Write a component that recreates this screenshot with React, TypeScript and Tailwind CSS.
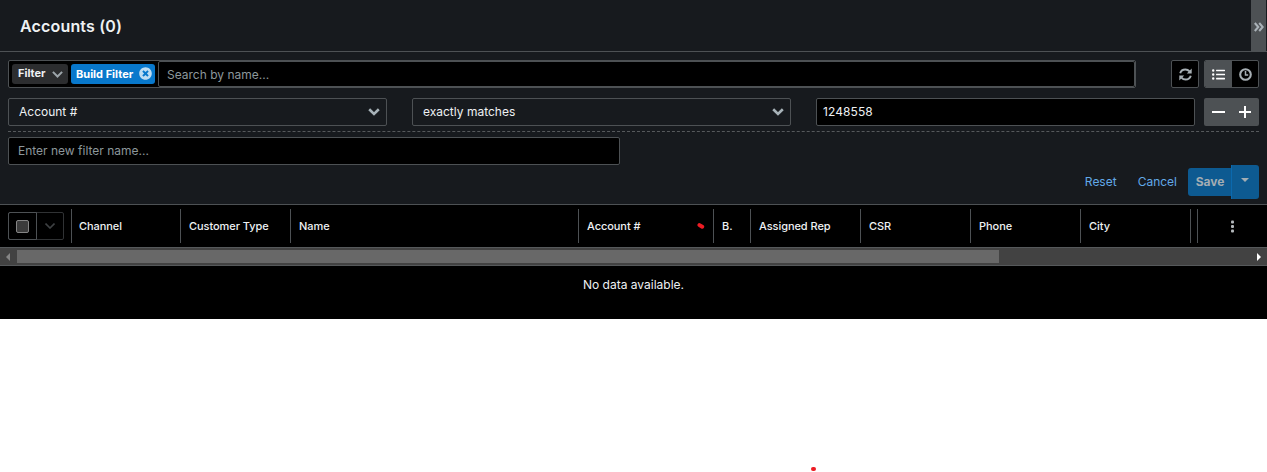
import {
  FaTimesCircle,
  FaListUl,
} from "react-icons/fa";

const columns = [
  { label: "Channel", width: 109, padding: "pl-[7px]" },
  { label: "Customer Type", width: 110, padding: "pl-2" },
  { label: "Name", width: 288, padding: "pl-2" },
  { label: "Account #", width: 135, padding: "pl-2", marked: true },
  { label: "B.", width: 37, padding: "pl-2" },
  { label: "Assigned Rep", width: 110, padding: "pl-2" },
  { label: "CSR", width: 110, padding: "pl-2" },
  { label: "Phone", width: 110, padding: "pl-2" },
  { label: "City", width: 110, padding: "pl-2" },
];

function Chevron({ className = "" }: { className?: string }) {
  return (
    <svg className={className} width="12" height="8" viewBox="0 0 12 8" fill="none" stroke="currentColor" strokeWidth="2.600">
      <path d="M1.200 1.300 6 6 10.800 1.300" />
    </svg>
  );
}

function Header() {
  return (
    <header className="flex h-[52px] border-b border-[#4d5154]">
      <h1 className="flex-1 pl-5 pt-px text-base font-semibold leading-[51px] tracking-[0.16px] text-[#eef1f3]">
        Accounts (0)
      </h1>
      <button className="-mb-px mr-px flex h-[52px] w-[15px] items-center justify-center bg-[#4d5154] pl-px pt-px text-[#aab2b8]">
        <svg width="10" height="10" viewBox="0 0 10 10" fill="none" stroke="currentColor" strokeWidth="2.1">
          <path d="M.8 1l3.500 4-3.500 4M5.200 1l3.500 4-3.500 4" />
        </svg>
      </button>
    </header>
  );
}

function SearchRow() {
  return (
    <div className="flex h-7">
      <div className="flex w-[1128px] items-center rounded-[2px] border border-[#4d5154] bg-black pl-[3px]">
        <button className="flex h-5 w-14 items-center justify-between rounded-[3px] bg-[#2c2d2f] pb-px pl-[6px] pr-[5px] text-[11px] font-bold text-[#eef1f3]">
          Filter
          <svg className="mt-px" width="11" height="7" viewBox="0 0 11 7" fill="none" stroke="#9da5aa" strokeWidth="2">
            <path d="M.9.9 5.500 5.500 10.100.9" />
          </svg>
        </button>
        <button className="ml-[3px] flex h-5 w-[84px] items-center justify-between rounded-[3px] bg-[#0878cc] pl-[5px] pr-[3px] text-[11px] font-bold text-white">
          <span>Build Filter</span>
          <FaTimesCircle className="mb-[2px] size-[13px] text-[#bddcf2]" />
        </button>
        <div className="ml-[3px] flex h-[26px] flex-1 items-center rounded-[2px] border border-[#4d5154] pl-2 pt-[2px] text-[12px] text-[#8c979b]">
          Search by name...
        </div>
      </div>
      <button className="ml-[35px] flex w-7 items-center justify-center rounded-[2px] border border-[#4d5154] bg-black text-[#a7afb4]">
        <svg width="13" height="13" viewBox="0 0 13 13" fill="none" stroke="currentColor" strokeWidth="1.9">
          <path d="M1.200 5.300C1.900 2.800 4 1.500 6.400 1.500c1.900 0 3.100.7 4.200 1.900M11.800 7.700c-.7 2.500-2.800 3.800-5.200 3.800-1.900 0-3.100-.7-4.200-1.900" />
          <path d="M12.700.6v4.900H7.800zM.3 12.400V7.500h4.900z" fill="currentColor" stroke="none" />
        </svg>
      </button>
      <div className="ml-[5px] flex w-[55px] overflow-hidden rounded-[2px] border border-[#4d5154] bg-black">
        <button className="flex w-[27px] items-center justify-center bg-[#4d5154] text-white">
          <FaListUl className="size-[13px]" />
        </button>
        <button className="flex flex-1 items-center justify-center text-[#a7afb4]">
          <svg width="13" height="13" viewBox="0 0 13 13" fill="none" stroke="currentColor">
            <circle cx="6.500" cy="6.500" r="5.300" strokeWidth="2.100" />
            <path d="M6.500 3v4H9.200" strokeWidth="1.500" />
          </svg>
        </button>
      </div>
    </div>
  );
}

function SelectBox({ value }: { value: string }) {
  return (
    <div className="flex h-7 w-[379px] items-center justify-between rounded-[2px] border border-[#4d5154] pl-[10px] pr-[6px] text-[12px] text-[#eef1f3]">
      <span>{value}</span>
      <Chevron className="text-[#a7b2b8]" />
    </div>
  );
}

function CriteriaRow() {
  return (
    <div className="mt-[10px] flex h-7">
      <div className="flex gap-[25px]">
        <SelectBox value="Account #" />
        <SelectBox value="exactly matches" />
        <div className="flex w-[379px] items-center rounded-[2px] border border-[#4d5154] bg-black pl-[6px] text-[12px] tracking-[0.08px] text-[#eef1f3]">
          1248558
        </div>
      </div>
      <div className="ml-[9px] flex w-[55px] rounded-[2px] bg-[#4d5154] text-white">
        <button className="flex w-7 items-center justify-center">
          <svg width="14" height="14" viewBox="0 0 14 14" fill="currentColor">
            <path d="M1 6h13v2H1z" />
          </svg>
        </button>
        <button className="flex w-[27px] items-center justify-center">
          <svg width="13" height="14" viewBox="0 0 13 14" fill="currentColor">
            <path d="M0 6h12v2H0zM5 1h2v12H5z" />
          </svg>
        </button>
      </div>
    </div>
  );
}

function Actions() {
  return (
    <div className="flex h-[34px] items-center justify-end text-[12px] text-[#62a9e8]">
      <button className="mr-[21px]">Reset</button>
      <button className="mr-[11px]">Cancel</button>
      <button className="h-7 w-[43px] rounded-l-[3px] bg-[#0d5a91] pl-px font-bold text-[#a3adb3]">Save</button>
      <button className="flex h-[34px] w-7 items-center justify-center rounded-r-[3px] border-l border-[#0b69ae] bg-[#0d5a91] pb-1 text-[#a3adb3]">
        <svg className="mr-px" width="8" height="4" viewBox="0 0 8 4" fill="currentColor">
          <path d="M0 0h8L4 4z" />
        </svg>
      </button>
    </div>
  );
}

function TableHeader() {
  return (
    <div className="flex h-[42px] items-center pl-2">
      <div className="mr-[7px] flex h-7 w-14 rounded-[2px] border border-[#303234]">
        <div className="-my-px -ml-px flex w-[29px] items-center justify-center rounded-l-[2px] border border-[#4d5154]">
          <span className="mt-px block size-[13px] rounded-[2px] border border-[#858585] bg-[#3b3b3b]" />
        </div>
        <div className="flex flex-1 items-center justify-center pr-px text-[#3e4143]">
          <svg width="10" height="6" viewBox="0 0 10 6" fill="none" stroke="currentColor" strokeWidth="1.600">
            <path d="M.5.5 5 5 9.500.5" />
          </svg>
        </div>
      </div>
      {columns.map((column) => (
        <div
          key={column.label}
          className={`flex h-[34px] shrink-0 items-center justify-between border-l border-[#4d5154] pr-2 text-[11px] font-medium tracking-[-0.06px] text-[#eef1f3] ${column.padding}`}
          style={{ width: column.width }}
        >
          <span className="whitespace-nowrap">{column.label}</span>
          {column.marked && (
            <svg width="8" height="8" viewBox="0 0 8 8">
              <path d="M2.500 3.100 5.200 4.700" stroke="#ed1c24" strokeWidth="4" strokeLinecap="round" />
            </svg>
          )}
        </div>
      ))}
      <div className="h-[34px] w-[7px] border-l border-[#4d5154]" />
      <div className="flex h-[34px] flex-1 items-center justify-center border-l border-[#4d5154] text-[#b4b8bb]">
        <svg width="3" height="13" viewBox="0 0 3 13" fill="currentColor">
          <rect y=".5" width="3" height="3" rx="1" />
          <rect y="5" width="3" height="3" rx="1" />
          <rect y="9.500" width="3" height="3" rx="1" />
        </svg>
      </div>
    </div>
  );
}

function ScrollBar() {
  return (
    <div className="flex h-[19px] items-center border-y border-[#56595b] bg-[#424242]">
      <svg className="ml-[6px] mr-[7px]" width="4" height="8" viewBox="0 0 4 8" fill="#858585">
        <path d="M4 0v8L0 4z" />
      </svg>
      <div className="h-[13px] w-[982px] bg-[#686868]" />
      <svg className="ml-auto mr-[6px]" width="4" height="8" viewBox="0 0 4 8" fill="#ffffff">
        <path d="M0 0v8l4-4z" />
      </svg>
    </div>
  );
}

export default function App() {
  return (
    <div className="h-[472px] w-[1267px] overflow-hidden bg-white font-['Inter',sans-serif]">
      <main className="h-[319px] bg-black">
        <div className="h-[205px] border-b border-[#4d5154] bg-[#171a1e]">
          <Header />
          <div className="px-2 pt-2">
            <SearchRow />
            <CriteriaRow />
            <div className="mt-[5px] border-t border-dashed border-[#56595c]" />
            <div className="mt-[5px] flex h-7 w-[612px] items-center rounded-[2px] border border-[#4d5154] bg-black pl-[9px] text-[12px] text-[#8c979b]">
              Enter new filter name...
            </div>
            <Actions />
          </div>
        </div>
        <TableHeader />
        <ScrollBar />
        <p className="pt-[9px] text-center text-[12px] leading-5 text-[#eef1f3]">No data available.</p>
      </main>
      <div className="flex h-[153px] items-end pb-px pl-[811px]">
        <span className="block h-[4px] w-[5px] rounded-full bg-[#ed1c24]" />
      </div>
    </div>
  );
}
